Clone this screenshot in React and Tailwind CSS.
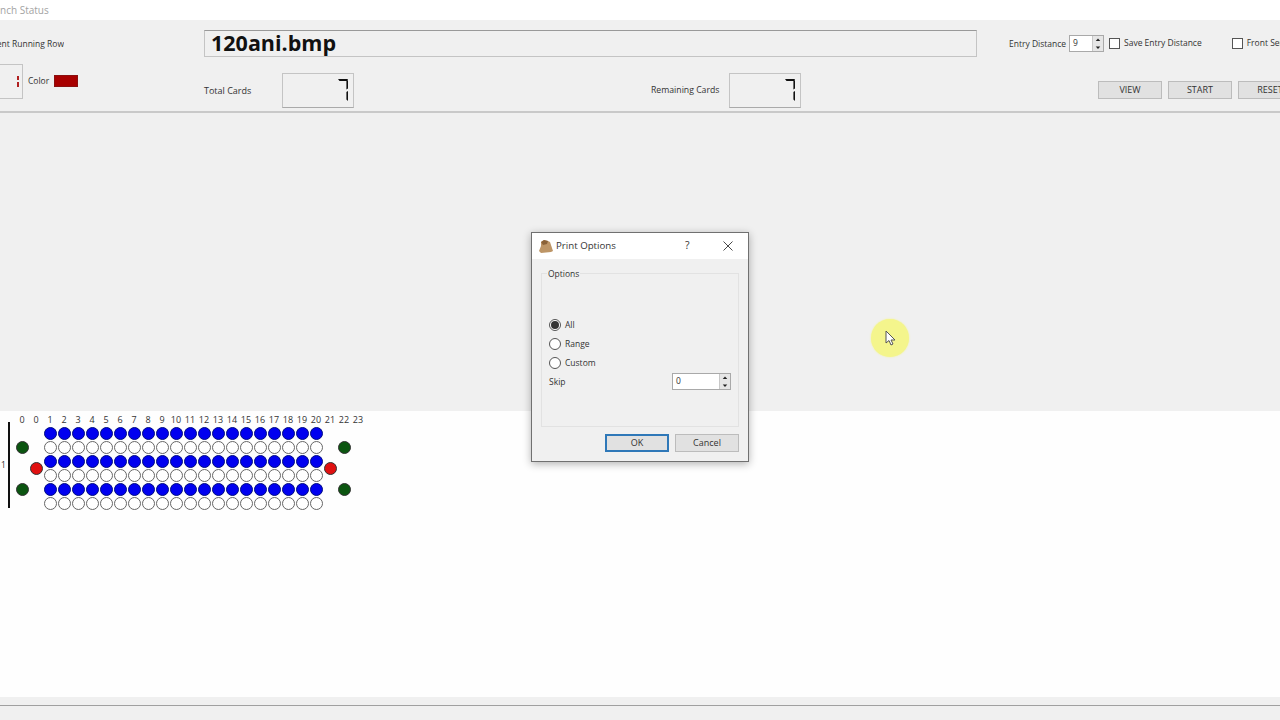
const FONT = "font-['Open_Sans','Liberation_Sans',sans-serif]";

const labels = ['0', '0', ...Array.from({ length: 23 }, (_, i) => String(i + 1))];
const pegs = Array.from({ length: 20 }, (_, i) => i + 2);
const rows = [
  { line: 1, filled: true },
  { line: 3, filled: false },
  { line: 5, filled: true },
  { line: 7, filled: false },
  { line: 9, filled: true },
  { line: 11, filled: false },
];
const markers = [
  { col: 0, line: 3, color: 'bg-[#0b5510]' },
  { col: 0, line: 9, color: 'bg-[#0b5510]' },
  { col: 1, line: 6, color: 'bg-[#e01010]' },
  { col: 22, line: 6, color: 'bg-[#e01010]' },
  { col: 23, line: 3, color: 'bg-[#0b5510]' },
  { col: 23, line: 9, color: 'bg-[#0b5510]' },
];

function Spin({ value, className }) {
  return (
    <div className={`flex h-[17px] items-center border border-[#a9a9a9] bg-white pl-[3px] text-[8.5px] text-[#333] ${className}`}>
      <span className="flex-1">{value}</span>
      <div className="flex h-full w-[11px] flex-col border-l border-[#c8c8c8] bg-[#e6e6e6]">
        <svg viewBox="0 0 11 7" className="h-1/2 w-full"><path d="M3 5h5L5.5 2z" fill="#222" /></svg>
        <svg viewBox="0 0 11 7" className="h-1/2 w-full"><path d="M3 2h5L5.5 5z" fill="#222" /></svg>
      </div>
    </div>
  );
}

function Check({ label, className }) {
  return (
    <div className={`flex shrink-0 items-center gap-[4px] whitespace-nowrap ${className}`}>
      <span className="h-[11px] w-[11px] shrink-0 border border-[#555] bg-white" />
      <span>{label}</span>
    </div>
  );
}

function SevenSeg() {
  return (
    <svg width="12" height="24" viewBox="0 0 12 24">
      <path d="M1 1h10l-1 2H2.5z" fill="#111" />
      <path d="M11 2v8.5l-1.6 1V3z" fill="#111" />
      <path d="M11 13v10l-1.6-1.5V14z" fill="#111" />
    </svg>
  );
}

function Counter() {
  return (
    <div className="flex h-[35px] w-[72px] shrink-0 items-center justify-end border border-[#c4c4c4] border-b-[#aaa] pr-[4px]">
      <SevenSeg />
    </div>
  );
}

function Btn({ children, className }) {
  return (
    <div className={`flex h-[18px] shrink-0 items-center justify-center border border-[#bcbcbc] bg-[#e1e1e1] text-[9px] text-[#333] ${className}`}>
      {children}
    </div>
  );
}

function Radio({ label, checked }) {
  return (
    <div className="flex h-[19px] items-center gap-[4px]">
      <span className="flex h-[12px] w-[12px] items-center justify-center rounded-full border border-[#555] bg-white">
        {checked && <span className="h-[8px] w-[8px] rounded-full bg-[#333]" />}
      </span>
      <span className="pt-[1px]">{label}</span>
    </div>
  );
}

export default function App() {
  return (
    <div className={`relative flex h-[720px] w-[1280px] flex-col overflow-hidden bg-[#fefefe] text-[8.5px] text-[#333] ${FONT}`}>
      {/* title bar */}
      <div className="flex h-[20px] shrink-0 items-center bg-white pt-[1px]">
        <span className="whitespace-nowrap text-[10px] text-[#a3a3a3]">nch Status</span>
      </div>

      {/* header panel */}
      <div className="flex h-[93px] shrink-0 flex-col border-b-2 border-[#c9c9c9] bg-[#f0f0f0]">
        <div className="mt-[10px] flex h-[27px] items-center">
          <div className="flex w-[64px] shrink-0 justify-end overflow-hidden whitespace-nowrap pt-[1px]">Current Running Row</div>
          <div className="ml-[140px] flex h-[27px] w-[773px] shrink-0 items-center border border-[#c4c4c4] border-t-[#999] pl-[6px] font-['Open_Sans',sans-serif] text-[21.5px] font-bold text-[#111]">
            120ani.bmp
          </div>
          <span className="ml-[32px] w-[57px] shrink-0 whitespace-nowrap pt-[1px]">Entry Distance</span>
          <Spin value="9" className="ml-[3px] w-[35px] shrink-0" />
          <Check label="Save Entry Distance" className="ml-[5px]" />
          <Check label="Front Sensor" className="ml-[30px]" />
        </div>
        <div className="relative flex flex-1 items-center pt-[12px]">
          <div className="absolute left-[-20px] top-[7px] flex h-[35px] w-[43px] items-center justify-end border border-[#c4c4c4] pr-[3px]">
            <svg width="2" height="11" viewBox="0 0 2 11"><path d="M0 0h2v4H0zM0 6h2v5H0z" fill="#b02020" /></svg>
          </div>
          <div className="ml-[28px] flex w-[176px] shrink-0 items-center gap-[5px] self-start pt-[6px]">
            <span>Color</span>
            <span className="h-[12px] w-[24px] border border-[#8a1010] bg-[#a80000]" />
          </div>
          <span className="w-[78px] shrink-0 pt-[1px] text-[9px]">Total Cards</span>
          <Counter />
          <span className="ml-[297px] w-[78px] shrink-0 whitespace-nowrap pt-[2px] text-[8.7px]">Remaining Cards</span>
          <Counter />
          <Btn className="ml-[297px] w-[64px]">VIEW</Btn>
          <Btn className="ml-[6px] w-[64px]">START</Btn>
          <Btn className="ml-[6px] w-[64px]">RESET</Btn>
        </div>
      </div>

      {/* grey work area */}
      <div className="h-[298px] shrink-0 bg-[#f0f0f0]" />

      {/* peg plan */}
      <div className="flex flex-1 bg-[#fefefe] pt-[1px]">
        <div className="flex w-[15px] shrink-0 flex-col">
          <div className="h-[10px]" />
          <div className="flex h-[86px] items-center pl-[1px]">
            <span className="w-[7px] text-[8.5px]">1</span>
            <span className="h-full w-[2px] bg-[#111]" />
          </div>
        </div>
        <div>
          <div className="flex h-[14px] items-center">
            {labels.map((label, i) => (
              <span key={i} className="w-[14px] shrink-0 text-center text-[9px] leading-none">{label}</span>
            ))}
          </div>
          <div className="grid grid-cols-[repeat(25,14px)] grid-rows-[repeat(12,7px)]">
            {rows.map((row) =>
              pegs.map((col) => (
                <span
                  key={`${row.line}-${col}`}
                  className={`h-[13px] w-[13px] place-self-center rounded-full border ${row.filled ? 'border-[#000c80] bg-[#0000f0]' : 'border-[#666] bg-white'}`}
                  style={{ gridColumn: `${col + 1} / span 1`, gridRow: `${row.line} / span 2` }}
                />
              ))
            )}
            {markers.map((m) => (
              <span
                key={`${m.col}-${m.line}`}
                className={`h-[13px] w-[13px] place-self-center rounded-full border border-[#333] ${m.color}`}
                style={{ gridColumn: `${m.col + 1} / span 1`, gridRow: `${m.line} / span 2` }}
              />
            ))}
          </div>
        </div>
      </div>

      {/* status bar */}
      <div className="h-[23px] shrink-0 bg-[#f0f0f0]">
        <div className="mt-[8px] border-t border-[#a0a0a0]" />
      </div>

      {/* dialog */}
      <div className="absolute left-[531px] top-[232px] flex h-[230px] w-[218px] flex-col border border-[#707070] bg-[#f0f0f0] shadow-[0_2px_8px_rgba(0,0,0,0.3)]">
        <div className="flex h-[26px] shrink-0 items-center bg-white pl-[7px]">
          <svg width="14" height="13" viewBox="0 0 14 13" className="mr-[3px]">
            <path d="M2 2l3-2 4 1 2 1 3 9-2 1-10 1-2-2 2-5z" fill="#bd9566" />
            <path d="M2 2l3-2 4 1-1 3-4 1z" fill="#8a6238" />
          </svg>
          <span className="w-[60px] whitespace-nowrap text-[9.7px] text-[#333]">Print Options</span>
          <span className="ml-[69px] text-[10.5px]">?</span>
          <svg width="10" height="10" viewBox="0 0 10 10" className="ml-[33px]">
            <path d="M.5.5l9 9M9.5.5l-9 9" stroke="#333" strokeWidth="0.9" />
          </svg>
        </div>
        <div className="relative mx-[9px] mt-[14px] flex h-[154px] flex-col border border-[#e2e2e2] px-[7px] pt-[41px]">
          <span className="absolute left-[5px] top-[-6px] bg-[#f0f0f0] px-[1px] leading-[12px]">Options</span>
          <Radio label="All" checked />
          <Radio label="Range" />
          <Radio label="Custom" />
          <div className="flex h-[19px] items-center justify-between">
            <span className="pt-[1px]">Skip</span>
            <Spin value="0" className="w-[59px]" />
          </div>
        </div>
        <div className="mr-[9px] mt-[7px] flex justify-end gap-[6px]">
          <Btn className="w-[64px] !border-[#2f78b8] !border-2">OK</Btn>
          <Btn className="w-[64px]">Cancel</Btn>
        </div>
      </div>

      {/* cursor highlight */}
      <div className="absolute left-[871px] top-[319px] flex h-[38px] w-[38px] items-center justify-center rounded-full bg-[#f4f58c] shadow-[0_0_2px_#f4f58c]">
        <svg width="11" height="16" viewBox="0 0 11 16">
          <path d="M1 1v12l3-2.5L6 15l2-1-2-4h4z" fill="#fff" stroke="#555" strokeWidth="1" />
        </svg>
      </div>
    </div>
  );
}
